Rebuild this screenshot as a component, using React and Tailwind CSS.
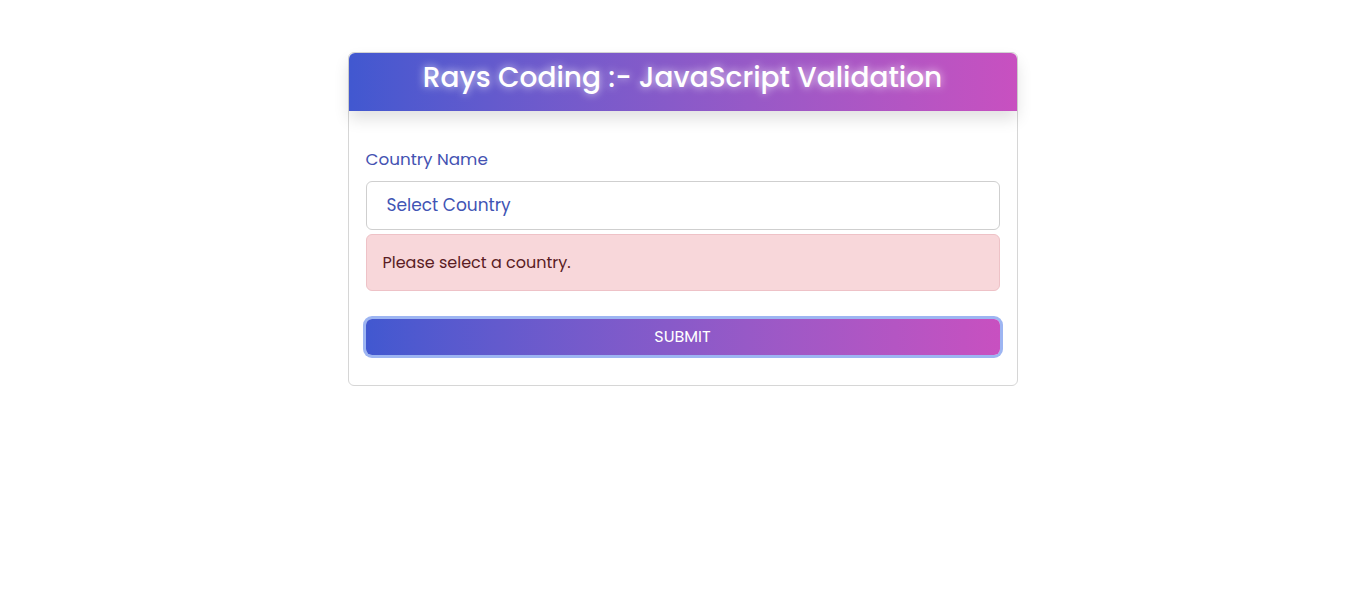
export default function App() {
  return (
    <div className="min-h-[594px] w-full bg-white font-['Poppins','Inter','Liberation_Sans',sans-serif]">
      <div className="flex justify-center pt-[52px] pl-[5px]">
        <div className="w-[670px] rounded-md border border-[#d6d6d6] bg-white">
          <div className="flex h-[58px] items-start justify-center rounded-t-md bg-gradient-to-r from-[#4158d0] to-[#c850c0] pt-[4px] shadow-[0_8px_16px_rgba(0,0,0,0.12)]">
            <h1 className="text-[28px] font-medium text-white [text-shadow:0_0_8px_rgba(255,255,255,0.8)]">
              Rays Coding :- JavaScript Validation
            </h1>
          </div>
          <div className="px-[17px] pt-[36px] pb-[30px]">
            <label className="block text-[16.8px] text-[#4452b2]">Country Name</label>
            <div className="mt-[9px] flex h-[49px] items-center rounded-md border border-[#cfcfcf] bg-white px-[20px] text-[17px] text-[#4154b4]">
              Select Country
            </div>
            <div className="mt-[4px] flex h-[57px] items-center rounded-md border border-[#eec2c7] bg-[#f8d7da] px-[16px] text-[16px] text-[#5a1c24]">
              Please select a country.
            </div>
            <button className="mt-[28px] flex h-[36px] w-full items-center justify-center rounded-md bg-gradient-to-r from-[#4158d0] to-[#c850c0] text-[16px] text-white ring-[3px] ring-[#9db5f2]">
              SUBMIT
            </button>
          </div>
        </div>
      </div>
    </div>
  );
}
